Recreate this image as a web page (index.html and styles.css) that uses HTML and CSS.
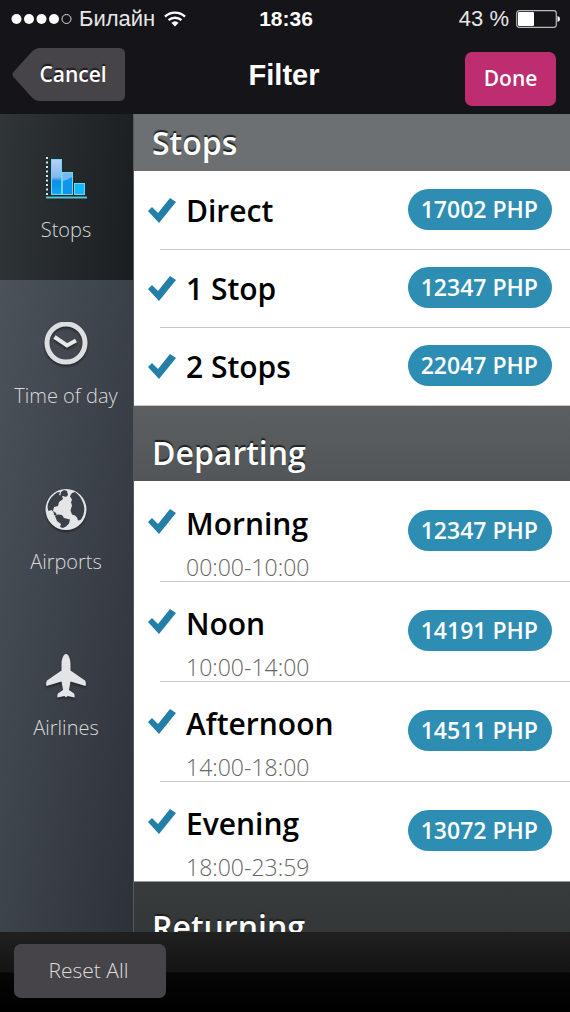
FILE: index.html
```html
<!DOCTYPE html>
<html lang="en">
<head>
<meta charset="utf-8">
<meta name="viewport" content="width=device-width, initial-scale=1">
<title>Filter</title>
<link rel="stylesheet" href="styles.css">
</head>
<body>
<div class="status">
  <div class="carrier">
    <svg class="signal" viewBox="0 0 60 12" aria-hidden="true"><g fill="#fff"><circle cx="4.500" cy="6" r="5"/><circle cx="17" cy="6" r="5"/><circle cx="29.500" cy="6" r="5"/><circle cx="42" cy="6" r="5"/></g><circle cx="54.500" cy="6" r="4.500" fill="none" stroke="#ddd"/></svg>
    <span>Билайн</span>
    <svg class="wifi" viewBox="0 0 22 16" aria-hidden="true"><path d="M1 5.600a14.500 14.500 0 0 1 20 0M4.600 9.200a9.400 9.400 0 0 1 12.800 0" fill="none" stroke="#fff" stroke-width="2.400"/><path d="M7.400 11.800a5.400 5.400 0 0 1 7.200 0L11 15.600z" fill="#fff"/></svg>
  </div>
  <time class="clock">18:36</time>
  <div class="power">
    <span>43 %</span>
    <svg class="battery" viewBox="0 0 44 18" aria-hidden="true"><rect x=".7" y=".7" width="39.600" height="16.600" rx="2.500" fill="none" stroke="#bbb" stroke-width="1.200"/><rect x="2" y="2" width="16" height="14" rx="1" fill="#fff"/><path d="M41.500 6q2.500.6 2.500 3t-2.500 3z" fill="#fff"/></svg>
  </div>
</div>
<header class="navbar">
  <button class="btn cancel" type="button">
    <svg class="cancel-shape" viewBox="0 0 114 54" preserveAspectRatio="none" aria-hidden="true"><path d="M1.500 24 20 3.500Q23.500 0 28 0H107q6 0 6 6V47q0 6-6 6H28q-4.500 0-8-3.500L1.500 29Q-.5 26.500 1.500 24z" fill="#464449"/></svg>
    <span class="cancel-label">Cancel</span>
  </button>
  <h1 class="title">Filter</h1>
  <button class="btn done" type="button">Done</button>
</header>
<main class="main">
  <nav class="tabs">
    <a class="tab active" href="#stops">
      <svg class="icon" viewBox="0 0 44 44" aria-hidden="true">
        <defs><linearGradient id="bar" x1="0" y1="0" x2="0" y2="1"><stop offset="0" stop-color="#b5d3f5"/><stop offset=".5" stop-color="#83b8ee"/><stop offset=".62" stop-color="#0a8de4"/><stop offset="1" stop-color="#14a9f6"/></linearGradient></defs>
        <path d="M3 1v39" stroke="#c9edf5" stroke-width="2" stroke-dasharray="2 2.500"/>
        <g stroke="#6bd9f4"><rect x="7.500" y="3.500" width="10" height="35" fill="url(#bar)"/><rect x="18.500" y="16.500" width="10" height="22" fill="#0b98ec"/><path d="M19 17h9v4q-5 3-9 4z" fill="#79b8ef" stroke="none"/><rect x="30.500" y="27.500" width="10" height="11" fill="#14b5fa"/></g>
        <path d="M2 41.500h41" stroke="#4fc6d6" stroke-width="2"/>
      </svg>
      <span>Stops</span>
    </a>
    <a class="tab" href="#time">
      <svg class="icon" viewBox="0 0 44 44" aria-hidden="true"><circle cx="22" cy="21" r="19" fill="none" stroke="#dcdee0" stroke-width="5"/><path d="M10.500 15 23 23.500 32 18.500" fill="none" stroke="#e6e8e9" stroke-width="4"/></svg>
      <span>Time of day</span>
    </a>
    <a class="tab" href="#airports">
      <svg class="icon" viewBox="0 0 44 44" aria-hidden="true"><circle cx="22" cy="21.500" r="20.500" fill="#e3e5e7"/><g fill="#3a4047"><path d="M13 4.500Q6 9 4 16 3 20 4.500 23l3-1 2 2 .5 3 3 1-1-3-3-2 1-4 4-1 1-4 4-3-1-3-3-1 1-3z"/><path d="m17 4 3-2 3 1 1 4-2 2-3-1-3 1z"/><path d="m28 5 3-1q6 4 8.500 12 2.500 9-3 16l-2.500.5-1-3-2-2-3-1-1.500-4 1.500-5-1-3 1-3-2-3 1-2z"/><path d="m11 28 3-1.500 4 .5 2 3 6 1.500-1 4-3 3-3 1.500-3-1 1-3-4-3z"/></g></svg>
      <span>Airports</span>
    </a>
    <a class="tab" href="#airlines">
      <svg class="icon" viewBox="0 0 44 44" aria-hidden="true"><path d="M22 0c-2.500 0-4.500 5-4.500 10v6.500L3 26.500Q1.500 29 2.500 32L17.500 27.500 19 36l-5 3.500q-1 2-.5 4l7-1.500L22 43.500l1.500-1.500 7 1.500q.5-2-.5-4L25 36l1.500-8.500L41.500 32q1-3-.5-5.500L26.500 16.500V10C26.500 5 24.500 0 22 0z" fill="#e3e4e7"/></svg>
      <span>Airlines</span>
    </a>
  </nav>
  <div class="filters">
    <section>
      <h2 class="heading first">Stops</h2>
      <ul class="list">
        <li class="item"><label class="row"><input class="check" type="checkbox" checked><span class="name">Direct</span><span class="price">17002 PHP</span></label></li>
        <li class="item"><label class="row"><input class="check" type="checkbox" checked><span class="name">1 Stop</span><span class="price">12347 PHP</span></label></li>
        <li class="item"><label class="row"><input class="check" type="checkbox" checked><span class="name">2 Stops</span><span class="price">22047 PHP</span></label></li>
      </ul>
    </section>
    <section>
      <h2 class="heading second">Departing</h2>
      <ul class="list">
        <li class="item"><label class="row tall"><input class="check" type="checkbox" checked><span class="name">Morning<small class="hours">00:00-10:00</small></span><span class="price">12347 PHP</span></label></li>
        <li class="item"><label class="row tall"><input class="check" type="checkbox" checked><span class="name">Noon<small class="hours">10:00-14:00</small></span><span class="price">14191 PHP</span></label></li>
        <li class="item"><label class="row tall"><input class="check" type="checkbox" checked><span class="name">Afternoon<small class="hours">14:00-18:00</small></span><span class="price">14511 PHP</span></label></li>
        <li class="item"><label class="row tall"><input class="check" type="checkbox" checked><span class="name">Evening<small class="hours">18:00-23:59</small></span><span class="price">13072 PHP</span></label></li>
      </ul>
    </section>
    <section>
      <h2 class="heading third">Returning</h2>
    </section>
  </div>
</main>
<footer class="footer"><button class="btn reset" type="button">Reset All</button></footer>
</body>
</html>
```
FILE: styles.css
```css
* { box-sizing: border-box; }

body {
  margin: 0;
  height: 100vh;
  display: flex;
  flex-direction: column;
  background: #151419;
  color: #fff;
  font-family: "Open Sans", "Noto Sans", sans-serif;
}

.status {
  display: grid;
  grid-template-columns: 1fr auto 1fr;
  align-items: center;
  height: 37px;
  flex: none;
  padding: 0 10px 0 12px;
  font: 22px/26px "Liberation Sans", Arial, sans-serif;
  color: #e8e8e8;
}
.carrier, .power { display: flex; align-items: center; gap: 7px; }
.power { justify-content: flex-end; }
.signal { width: 60px; height: 12px; overflow: visible; }
.wifi { width: 22px; height: 16px; margin-left: 2px; }
.battery { width: 44px; height: 18px; }
.clock { font-size: 21px; font-weight: 700; color: #fff; }

.navbar {
  display: grid;
  grid-template-columns: 1fr auto 1fr;
  height: 77px;
  flex: none;
  padding: 11px 14px 0 12px;
}
.title {
  margin: 11px 0 0;
  font: 700 29px/32px "Liberation Sans", Arial, sans-serif;
}
.btn {
  border: 0;
  padding: 0;
  color: #fff;
  font: 600 21px/30px "Open Sans", "Noto Sans", sans-serif;
}
.cancel {
  display: grid;
  width: 114px;
  height: 54px;
  background: none;
  text-shadow: 0 -2px 1px #1c1a1e;
}
.cancel-shape, .cancel-label { grid-area: 1 / 1; }
.cancel-shape { width: 114px; height: 54px; }
.cancel-label { padding: 11px 0 0 8px; }
.done {
  justify-self: end;
  width: 91px;
  height: 54px;
  margin-top: 4px;
  padding-bottom: 2px;
  border-radius: 7px;
  background: #bd2d70;
}

.main {
  flex: 1;
  min-height: 0;
  display: flex;
  overflow: hidden;
}
.tabs {
  flex: none;
  width: 134px;
  background: linear-gradient(100deg, #50565e, #2d3239);
  border-right: 1px solid #555a5e;
}
.tab {
  display: flex;
  flex-direction: column;
  align-items: center;
  gap: 14px;
  height: 166px;
  padding: 42px 1px 0 0;
  color: #d8dadc;
  font-size: 20px;
  line-height: 32px;
  font-weight: 300;
  text-decoration: none;
}
.tab.active {
  background: linear-gradient(95deg, #303538, #1a1e20);
}
.icon {
  width: 44px;
  height: 44px;
  filter: drop-shadow(0 2px 1px #24282d);
}

.filters {
  flex: 1;
  min-width: 0;
  background: #fff;
}
.heading {
  display: flex;
  align-items: flex-end;
  margin: 0;
  padding: 0 18px 6px;
  font-size: 32px;
  line-height: 44px;
  font-weight: 600;
  text-shadow: 0 -2px 1px #1e2021;
}
.first { height: 57px; background: #6c7072; }
.second {
  height: 76px;
  border-top: 1px solid #c8c8c8;
  background: linear-gradient(#5b5f61, #535658);
}
.third {
  height: 74px;
  border-top: 1px solid #999;
  background: linear-gradient(#373b3c, #313536);
}
.list { list-style: none; margin: 0; padding: 0; }
.item + .item .row::before {
  content: "";
  position: absolute;
  top: 0;
  left: 26px;
  right: 0;
  border-top: 1px solid #c8c8c8;
}
.row {
  position: relative;
  display: flex;
  align-items: flex-start;
  height: 78px;
  padding: 18px 18px 0 14px;
  color: #000;
}
.tall { height: 100px; padding-top: 29px; }
.check {
  appearance: none;
  flex: none;
  width: 28px;
  height: 25px;
  margin: 9px 10px 0 0;
}
.check:checked {
  background: #237fa8;
  clip-path: polygon(0 13px, 4px 9px, 10px 15px, 22px 0, 28px 4px, 11px 25px);
}
.name {
  flex: 1;
  font-size: 30px;
  line-height: 44px;
  font-weight: 600;
}
.tall .check { margin-top: -1px; }
.tall .name { margin-top: -8px; }
.hours {
  display: block;
  color: #666;
  font-size: 23px;
  line-height: 42px;
  font-weight: 300;
}
.price {
  flex: none;
  padding: 0 14px 1px 13px;
  border-radius: 21px;
  background: #2e8db3;
  color: #fff;
  font-size: 23px;
  line-height: 40px;
  font-weight: 600;
}

.footer {
  flex: none;
  height: 80px;
  padding: 12px 14px;
  background: linear-gradient(#202020, #141414 50%, #060606 51%, #000);
}
.reset {
  width: 152px;
  height: 54px;
  padding: 0 3px 2px 0;
  border-radius: 7px;
  background: #464449;
  color: #ddd;
  font-weight: 300;
}
```
